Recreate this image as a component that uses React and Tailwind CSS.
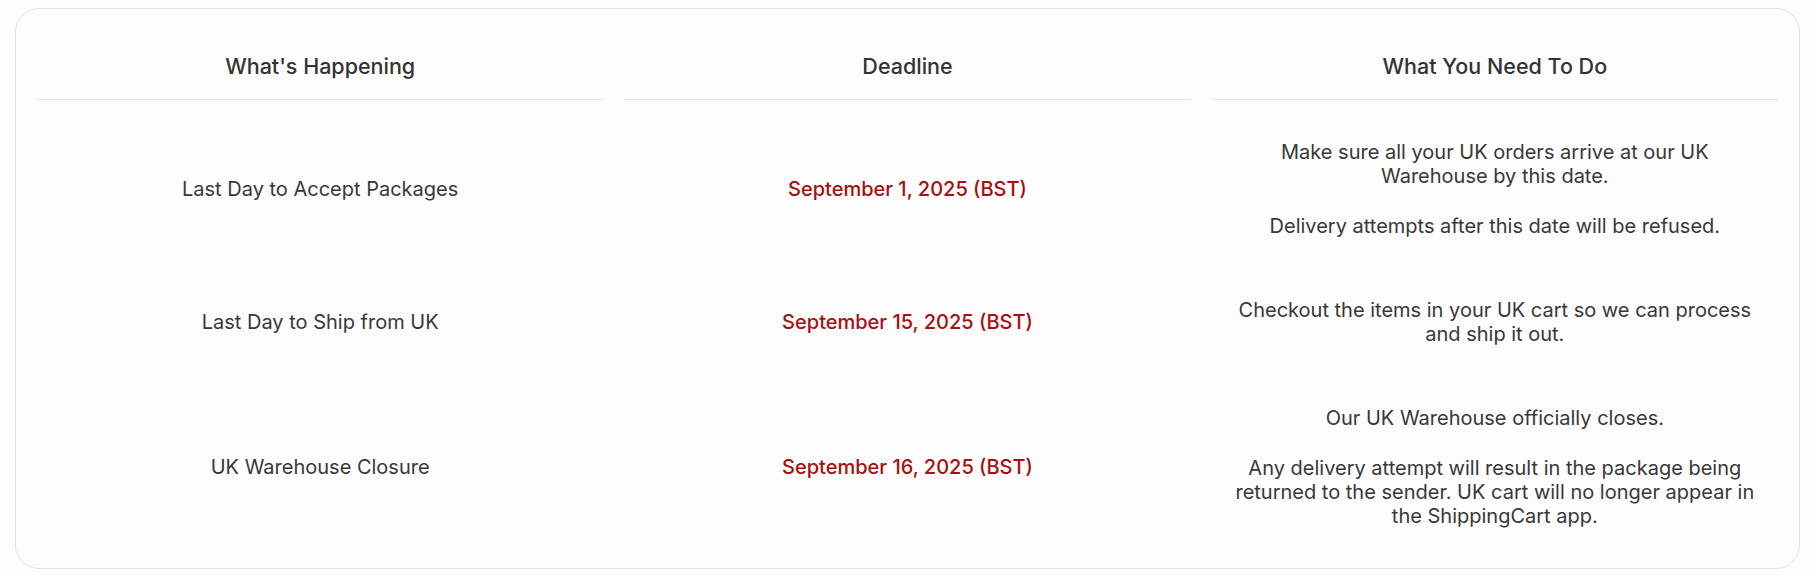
const rows = [
  {
    event: "Last Day to Accept Packages",
    deadline: "September 1, 2025 (BST)",
    action: [
      "Make sure all your UK orders arrive at our UK Warehouse by this date.",
      "Delivery attempts after this date will be refused.",
    ],
  },
  {
    event: "Last Day to Ship from UK",
    deadline: "September 15, 2025 (BST)",
    action: ["Checkout the items in your UK cart so we can process and ship it out."],
  },
  {
    event: "UK Warehouse Closure",
    deadline: "September 16, 2025 (BST)",
    action: [
      "Our UK Warehouse officially closes.",
      "Any delivery attempt will result in the package being returned to the sender. UK cart will no longer appear in the ShippingCart app.",
    ],
  },
];

const headers = ["What's Happening", "Deadline", "What You Need To Do"];

export default function App() {
  return (
    <div className="min-h-screen bg-[#fdfdfd] pt-[8px] pl-[15px] pr-[15px] font-['Inter',sans-serif] text-[#383838]">
      <div className="bg-[#fdfdfd] border border-[#e3e3e3] rounded-[24px] px-[21px] pb-[10px]">
        {/* header */}
        <div className="grid grid-cols-3 gap-x-[21px]">
          {headers.map((h) => (
            <div
              key={h}
              className="border-b border-[#e3e3e3] pt-[44px] pb-[20px] text-center text-[21.5px] leading-[26px] font-medium text-[#333]"
            >
              {h}
            </div>
          ))}
        </div>

        {/* body */}
        <div className="pt-[10px]">
          {rows.map((r) => (
            <div key={r.event} className="grid grid-cols-3 gap-x-[21px] py-[30px] items-center text-center text-[20px] leading-[24px]">
              <div>{r.event}</div>
              <div className="text-[#a80f0f] font-medium">{r.deadline}</div>
              <div className="px-[22px]">
                {r.action.map((a, i) => (
                  <p key={i} className={i > 0 ? "mt-[26px]" : ""}>
                    {a}
                  </p>
                ))}
              </div>
            </div>
          ))}
        </div>
      </div>
    </div>
  );
}
